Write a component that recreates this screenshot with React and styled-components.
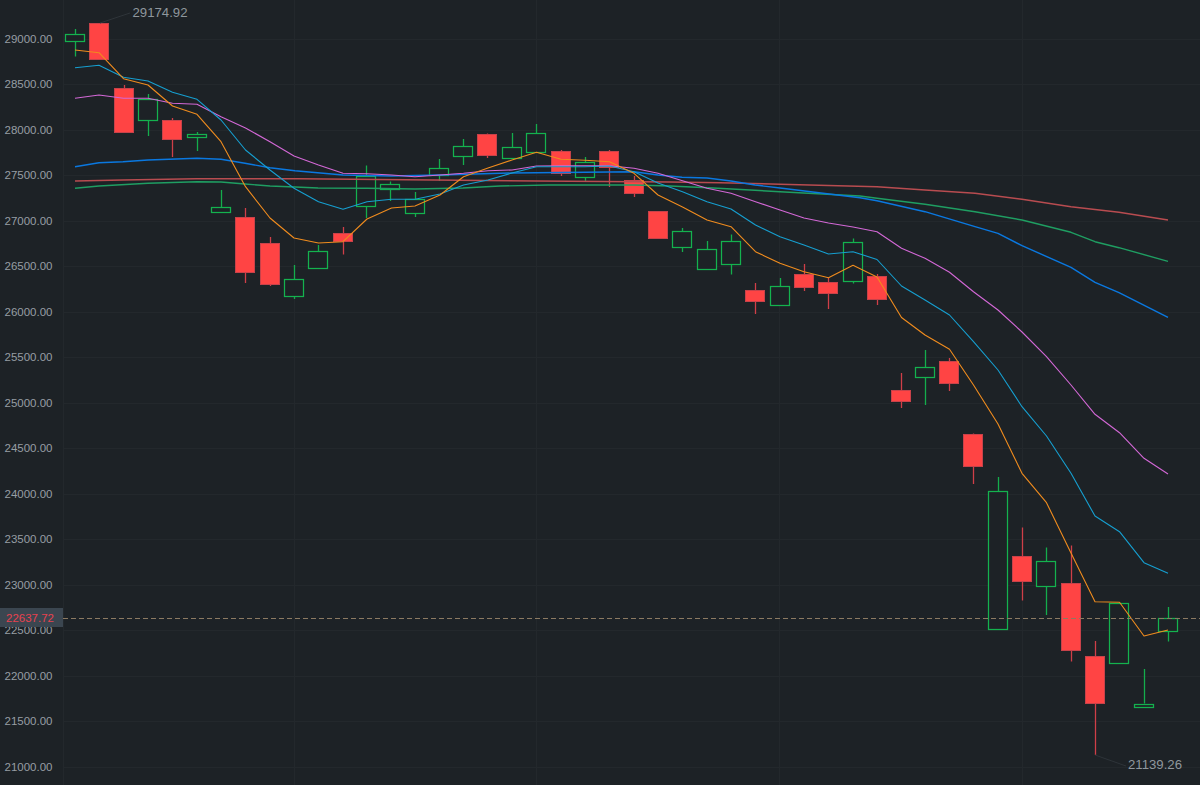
import React from "react";
import styled, { createGlobalStyle } from "styled-components";

const GlobalStyle = createGlobalStyle`
  html, body {
    margin: 0;
    padding: 0;
    background: #1d2226;
  }
`;

// cx, body top, body bottom, wick top, wick bottom, green?
const candles = [
  [75, 33.5, 40.5, 29, 56.5, 1],
  [99.5, 23, 58.5, 23, 60, 0],
  [124, 88, 131.5, 85, 133, 0],
  [148, 99, 119.5, 94, 136, 1],
  [172.5, 120, 138.5, 118, 157, 0],
  [197, 134, 136.5, 132, 151, 1],
  [221, 206.5, 211.5, 190, 211, 1],
  [245.5, 217, 271.5, 208, 283, 0],
  [270, 243, 283.5, 237, 286, 0],
  [294, 279, 295.5, 265, 299, 1],
  [318.5, 250.5, 267.5, 245, 267, 1],
  [343, 232.5, 240.5, 227, 254.5, 0],
  [366, 176, 205.5, 165.5, 218, 1],
  [390.5, 184, 188.5, 181.5, 201, 1],
  [415, 198.5, 212.5, 192, 217, 1],
  [439, 168, 174.5, 159, 181, 1],
  [463.5, 145.5, 155.5, 139, 165, 1],
  [487.5, 133.5, 154.5, 133.5, 158, 0],
  [512, 146.5, 158, 133, 159, 1],
  [536.5, 133, 151.5, 124, 151.5, 1],
  [561, 150.5, 172.5, 150, 176, 0],
  [585, 161.5, 176.5, 157, 181, 1],
  [609.5, 150.5, 166.5, 150, 187, 0],
  [634, 179.5, 192.5, 176, 197, 0],
  [658, 211, 237.5, 211, 238.5, 0],
  [682.5, 230.5, 246.5, 228, 252, 1],
  [707, 248.5, 268.5, 241, 268.5, 1],
  [731, 241, 263.5, 234.5, 274.5, 1],
  [755.5, 289.5, 300.5, 283, 314, 0],
  [780, 285.5, 304.5, 278, 304.5, 1],
  [804, 273.5, 287, 264, 291, 0],
  [828.5, 282, 292.5, 278, 309, 0],
  [853, 242, 280.5, 238.5, 283.5, 1],
  [877, 275.5, 298.5, 274, 305, 0],
  [901.5, 390, 400.5, 373, 408, 0],
  [925, 366.5, 376.5, 350, 405, 1],
  [949.5, 360.5, 382.5, 358, 391, 0],
  [973.5, 433.5, 465.5, 433.5, 484, 0],
  [998, 490.5, 628.5, 477, 628.5, 1],
  [1022, 556, 580.5, 527.5, 600.5, 0],
  [1046.5, 560.5, 585.5, 547.5, 615, 1],
  [1071, 582.5, 650, 545.5, 661.5, 0],
  [1095, 655.5, 703, 641, 755, 0],
  [1119.5, 602.5, 662.5, 602.5, 662.5, 1],
  [1144, 703.5, 707, 669, 703.5, 1],
  [1168, 618, 630.5, 607, 641.5, 1],
];

const maLines = [
  {
    color: "#b84c50",
    width: 1.5,
    points:
      "75,181 123,180 196,178.7 299,178.7 433,180 536,181 670,182 720,182.7 780,184.3 877,186.7 925,190 975,193.3 1022,199.3 1071,206.7 1119,212.3 1168,220",
  },
  {
    color: "#1f9e62",
    width: 1.4,
    points:
      "75,188.3 99,186 148,183.3 197,181.7 221,182 245,184 270,186 295,187 318,188 367,188.3 415,189 463,188 500,186 548,185 634,185 670,186 713,188 780,191.7 860,196 877,198.3 925,204.3 975,211.7 1022,220 1071,232.3 1095,241.7 1119,247.7 1168,261.3",
  },
  {
    color: "#0a78e0",
    width: 1.4,
    points:
      "75,166.7 99,162.7 123,161.7 148,160 197,158.3 221,159.3 245,163.3 270,167.7 295,170.7 343,175 391,176 440,175 512,173 536,172.7 634,171.7 658,175 682,177.3 707,178 731,181 755,185 780,188 860,197.7 877,200.7 925,211.7 975,226.7 998,233.3 1022,245.7 1071,267.3 1095,282.3 1119,292.7 1168,317.3",
  },
  {
    color: "#d368d6",
    width: 1.1,
    points:
      "75,98.3 99,95 123.5,98.3 148,98.3 172.5,103.3 197,104.3 221,116.7 245.5,128 270,141.7 294,156 318.5,165 343,173.3 367,173.7 391.5,175 415,176.7 440,175 463.5,173.3 488,170.7 512,170 536.5,166 561,165.7 585,165.7 609.5,165.7 634,168.3 658,173.3 682.5,180.7 707,188.3 731,193.3 755.5,201.7 780,210 804,218 828.5,223 853,227 877,231.7 901.5,248.3 925,258.3 949.5,272.3 973.5,291.7 998,310 1022,332 1046.5,356.7 1071,385 1095,414.3 1119.5,432.7 1144,458.3 1168,474",
  },
  {
    color: "#169fd0",
    width: 1.1,
    points:
      "75,67.7 99,65.3 123.5,77.3 148,81 172.5,92.3 197,99.3 221,120 245.5,150 270,170 294,188.3 318.5,201.7 343,209.3 367,201.7 391.5,199.3 415,199.3 440,194 463.5,185 488,180 512,173 536.5,166.7 561,166.7 585,166.7 609.5,166 634,171.7 658,183 682.5,191.7 707,201.7 731,209 755.5,225 780,236.7 804,245 828.5,254 853,251.7 877,259.5 901.5,286 925,300 949.5,315 973.5,341.7 998,370 1022,406.7 1046.5,436 1071,473.3 1095,516 1119.5,531.7 1144,562.7 1168,573.3",
  },
  {
    color: "#f08c1e",
    width: 1.1,
    points:
      "75,50 99,52.7 123.5,78.7 148,85 172.5,106 197,114.3 221,141.7 245.5,186.7 270,218 294,238 318.5,243 343,241.7 367,219 391.5,208 415,206 440,195 463.5,176.7 488,168 512,160 536.5,152.3 561,159.3 585,160.3 609.5,161.7 634,173.3 658,195 682.5,207 707,220 731,226.7 755.5,251.7 780,263.3 804,271.7 828.5,277.7 853,265.3 877,277 901.5,317.5 925,335 949.5,349.3 973.5,385 998,424 1022,473.3 1046.5,502.7 1071,553 1095,601.7 1119.5,602.3 1144,636 1168,630",
  },
];

const axisLabels = Array.from({ length: 17 }, (_, i) => ({
  text: (29000 - i * 500).toFixed(2),
  y: 39 + i * 45.5,
}));

const gridX = [63.5, 294.5, 536.5, 779.5, 1022.5];

const Page = styled.div`
  width: 1200px;
  height: 785px;
  overflow: hidden;
  background: #1d2226;
`;

const Chart = styled.svg`
  display: block;
`;

const GridLine = styled.line`
  stroke: #23282c;
  stroke-width: 1;
`;

const AxisText = styled.text`
  font-family: "Liberation Sans", Arial, sans-serif;
  font-size: 11.5px;
  fill: #979ea4;
`;

const MarkText = styled.text`
  font-family: "Liberation Sans", Arial, sans-serif;
  font-size: 13.2px;
  fill: #8f979d;
`;

const Leader = styled.line`
  stroke: #2e3439;
  stroke-width: 1;
`;

const Wick = styled.line`
  stroke: ${(p) => (p.$up ? "#14ad4c" : "#cf3f48")};
  stroke-width: 1.3;
`;

const Body = styled.rect`
  fill: ${(p) => (p.$up ? "#1d2226" : "#ff4444")};
  stroke: ${(p) => (p.$up ? "#14b24e" : "#c8424a")};
  stroke-width: ${(p) => (p.$up ? 1.25 : 1)};
`;

const MaLine = styled.polyline`
  fill: none;
  stroke: ${(p) => p.$color};
  stroke-width: ${(p) => p.$width};
  stroke-linejoin: round;
`;

const PriceLine = styled.line`
  stroke: #8c7a62;
  stroke-width: 1.2;
  stroke-dasharray: 5 3;
`;

const PriceTag = styled.rect`
  fill: #3b4650;
`;

const PriceText = styled.text`
  font-family: "Liberation Sans", Arial, sans-serif;
  font-size: 11.5px;
  fill: #e8424f;
`;

function Candle({ cx, top, bottom, wickTop, wickBottom, up }) {
  const left = Math.floor(cx - 9.75) + 0.5;
  const y1 = Math.round(top) + 0.5;
  const y2 = Math.round(bottom) + 0.5;
  return (
    <g>
      <Wick $up={up} x1={left + 10} x2={left + 10} y1={wickTop} y2={wickBottom} />
      <Body $up={up} x={left} width={19} y={y1} height={y2 - y1} />
    </g>
  );
}

export default function App() {
  return (
    <Page>
      <GlobalStyle />
      <Chart width="1200" height="785" viewBox="0 0 1200 785">
        {axisLabels.map((l) => (
          <GridLine key={l.y} x1="63" x2="1200" y1={Math.floor(l.y) + 0.5} y2={Math.floor(l.y) + 0.5} />
        ))}
        {gridX.map((x) => (
          <GridLine key={x} x1={x} x2={x} y1="0" y2="785" />
        ))}
        {axisLabels.map((l) => (
          <AxisText key={l.text} x="4.5" y={l.y + 3.5}>
            {l.text}
          </AxisText>
        ))}

        {candles.map(([cx, top, bottom, wickTop, wickBottom, up]) => (
          <Candle key={cx} cx={cx} top={top} bottom={bottom} wickTop={wickTop} wickBottom={wickBottom} up={!!up} />
        ))}

        {maLines.map((l) => (
          <MaLine key={l.color} points={l.points} $color={l.color} $width={l.width} />
        ))}

        <Leader x1="100" y1="23" x2="130" y2="13" />
        <MarkText x="132.5" y="17">29174.92</MarkText>
        <Leader x1="1095" y1="755" x2="1126" y2="766" />
        <MarkText x="1128" y="769">21139.26</MarkText>

        <PriceTag x="0" y="608" width="63" height="19" />
        <PriceText x="6" y="622">22637.72</PriceText>
        <PriceLine x1="63" x2="1200" y1="618.5" y2="618.5" />
      </Chart>
    </Page>
  );
}
